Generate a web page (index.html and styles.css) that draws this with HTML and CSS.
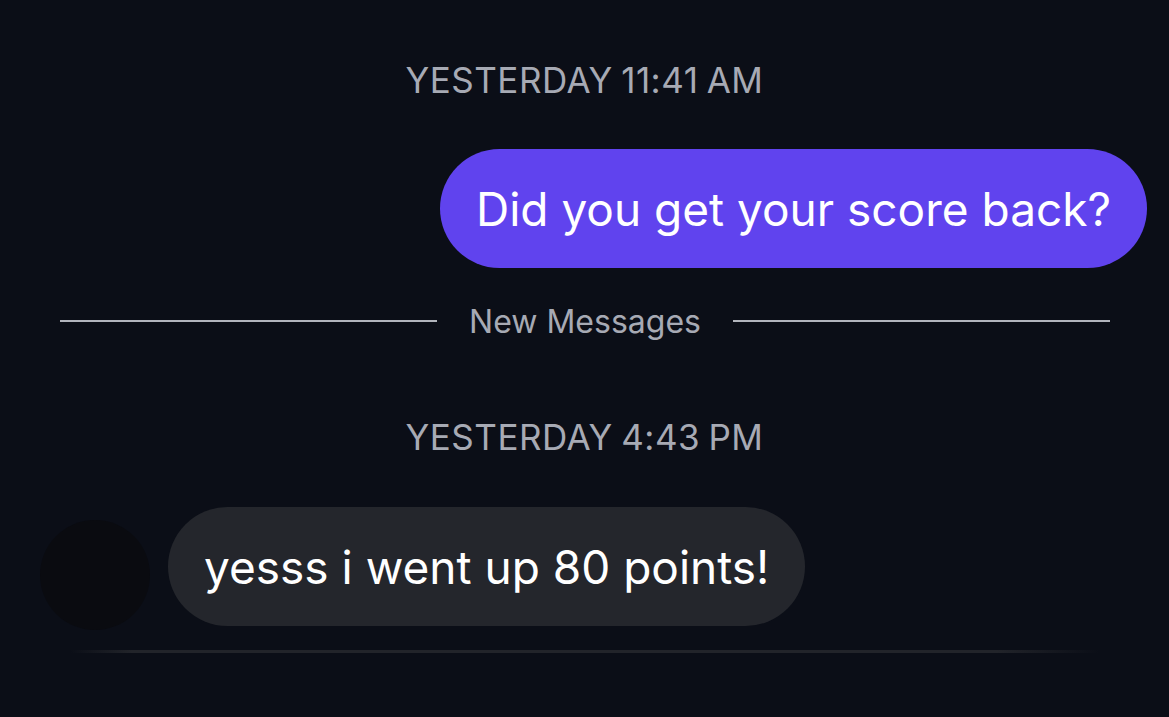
FILE: index.html
```html
<!DOCTYPE html>
<html>
  <head>
    <meta charset="utf-8">
    <title>Messages</title>
    <link rel="stylesheet" href="styles.css">
  </head>
  <body>
    <div class="thread">
      <div class="stamp first">YESTERDAY 11:41 AM</div>
      <div class="row out">
        <div class="bubble sent">Did you get your score back?</div>
      </div>
      <div class="divider">
        <span class="line"></span>
        <span class="label">New Messages</span>
        <span class="line"></span>
      </div>
      <div class="stamp second">YESTERDAY 4:43 PM</div>
      <div class="row in">
        <div class="avatar"></div>
        <div class="bubble received">yesss i went up 80 points!</div>
      </div>
      <div class="composer-edge"></div>
    </div>
  </body>
</html>
```

FILE: styles.css
```css
body {
  margin: 0;
  padding: 0;
  background-color: #0b0e17;
  font-family: Inter, "Liberation Sans", sans-serif;
  color: #fff;
}
.thread {
  display: flex;
  flex-direction: column;
  height: 717px;
  overflow: hidden;
}
.stamp {
  height: 40px;
  line-height: 40px;
  text-align: center;
  font-size: 35px;
  letter-spacing: 0.5px;
  word-spacing: -2px;
  color: #a7aab4;
}
.stamp.first {
  margin-top: 60px;
}
.stamp.second {
  margin-top: 76px;
}
.row {
  display: flex;
  align-items: flex-end;
}
.row.out {
  justify-content: flex-end;
  margin-top: 49px;
  padding-right: 22px;
}
.row.in {
  margin-top: 50px;
  padding-left: 40px;
  gap: 18px;
}
.bubble {
  height: 119px;
  display: flex;
  align-items: center;
  padding: 0 36px;
  border-radius: 60px;
  font-size: 46px;
  white-space: nowrap;
}
.sent {
  background-color: #6043ee;
}
.received {
  background-color: #24262c;
}
.avatar {
  width: 110px;
  height: 110px;
  border-radius: 50%;
  background-color: #0a0b10;
  margin-bottom: -4px;
}
.divider {
  margin-top: 33px;
  height: 40px;
  display: flex;
  align-items: center;
  gap: 32px;
  padding: 0 59px 0 60px;
}
.divider .line {
  flex: 1;
  height: 2px;
  background-color: #b2b5bd;
}
.divider .label {
  font-size: 32px;
  color: #a7aab4;
}
.composer-edge {
  margin: 24px 70px 0 70px;
  height: 3px;
  background: linear-gradient(to right, rgba(34,36,42,0), #22242a 6%, #22242a 90%, rgba(34,36,42,0));
}
```
